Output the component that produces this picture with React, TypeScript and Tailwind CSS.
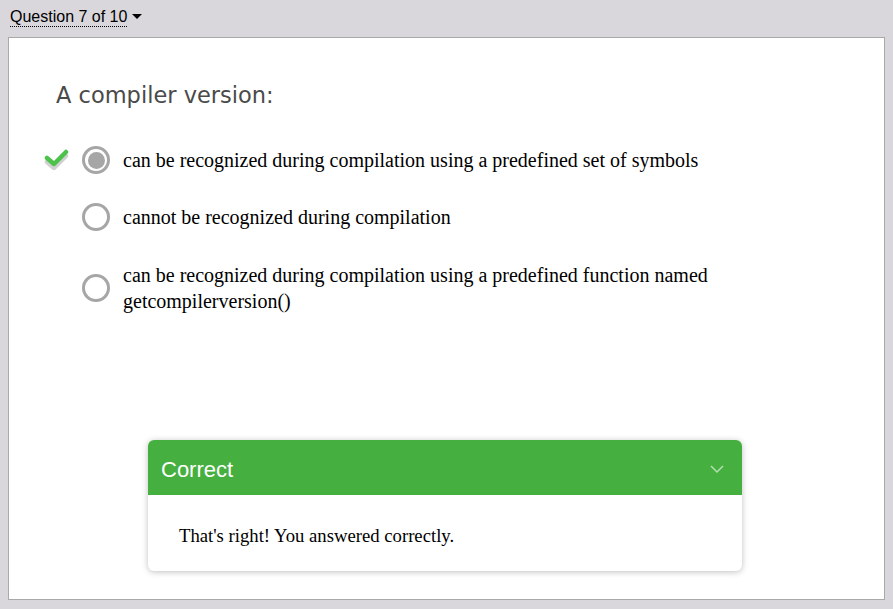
import React from "react";

function CheckMark() {
    return (
        <svg width="26" height="22" viewBox="0 0 26 22" className="absolute left-[-38px] top-[2px]">
            <path d="M3 12 L10 18 L22 6" fill="none" stroke="#d0d0d0" strokeWidth="4.5" strokeLinecap="round" strokeLinejoin="round" transform="translate(0 2)" />
            <path d="M3 10 L10 16 L22 4" fill="none" stroke="#4cc24a" strokeWidth="4.5" strokeLinecap="round" strokeLinejoin="round" />
        </svg>
    );
}

function Radio({ checked }: { checked?: boolean }) {
    return (
        <span className="flex h-[28px] w-[28px] shrink-0 items-center justify-center rounded-full border-[3px] border-[#a6a6a6] bg-white">
            {checked ? <span className="h-[17px] w-[17px] rounded-full bg-[#a6a6a6]" /> : null}
        </span>
    );
}

function Option({ text, checked, correct, className }: { text: string; checked?: boolean; correct?: boolean; className?: string }) {
    return (
        <div className={`relative flex items-center ${className ?? ""}`}>
            {correct ? <CheckMark /> : null}
            <Radio checked={checked} />
            <p className="ml-[13px] max-w-[640px] font-['Liberation_Serif',serif] text-[20px] leading-[26px] text-black">
                {text}
            </p>
        </div>
    );
}

export default function App() {
    return (
        <div className="flex h-[609px] w-[893px] flex-col bg-[#d9d7dc] px-[8px] pb-[9px]">
            <div className="flex h-[37px] items-center px-[2px] pb-[3px] font-['Liberation_Sans',Arial,sans-serif] text-[16px] text-black">
                <span className="border-b border-dotted border-black leading-[18px]">Question 7 of 10</span>
                <span className="ml-[5px] mt-[-2px] h-0 w-0 border-x-[5px] border-t-[5px] border-x-transparent border-t-black" />
            </div>

            <div className="flex flex-1 flex-col border border-[#a9a9a9] bg-white">
                <h1 className="ml-[47px] mt-[43px] font-['DejaVu_Sans',Verdana,sans-serif] text-[22.5px] leading-[28px] text-[#4a4a4a]">
                    A compiler version:
                </h1>

                <div className="ml-[73px] mt-[37px] flex flex-col gap-[29px]">
                    <Option checked correct text="can be recognized during compilation using a predefined set of symbols" />
                    <Option text="cannot be recognized during compilation" />
                    <Option className="mt-[2px]" text="can be recognized during compilation using a predefined function named getcompilerversion()" />
                </div>

                <div className="ml-[139px] mt-auto mb-[28px] w-[594px] overflow-hidden rounded-[6px] bg-white shadow-[0_1px_6px_rgba(0,0,0,0.25)]">
                    <div className="flex h-[55px] items-center justify-between bg-[#45b03f] pl-[13px] pr-[18px] pt-[3px]">
                        <span className="font-['Liberation_Sans',Arial,sans-serif] text-[22px] text-white">Correct</span>
                        <svg width="14" height="9" viewBox="0 0 14 9">
                            <path d="M1 1 L7 7 L13 1" fill="none" stroke="rgba(255,255,255,0.6)" strokeWidth="1.5" />
                        </svg>
                    </div>
                    <div className="flex h-[76px] items-center px-[31px] pt-[7px] font-['Liberation_Serif',serif] text-[18.7px] text-black">
                        That's right! You answered correctly.
                    </div>
                </div>
            </div>
        </div>
    );
}
